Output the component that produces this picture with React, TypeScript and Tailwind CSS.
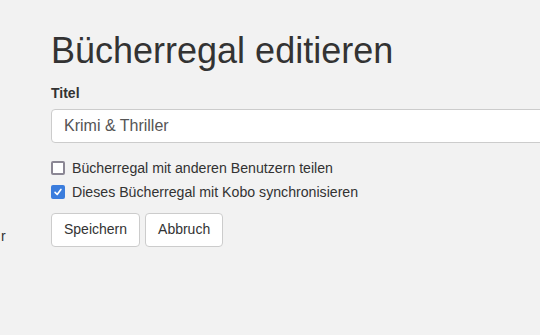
function Box({ checked }: { checked?: boolean }) {
  return checked ? (
    <span className="flex h-[14px] w-[14px] shrink-0 items-center justify-center rounded-[2px] bg-[#3b7ddd]">
      <svg viewBox="0 0 12 12" className="h-[10px] w-[10px]" fill="none" stroke="white" strokeWidth="2" strokeLinecap="round" strokeLinejoin="round">
        <path d="M2.5 6.5 5 9l4.5-6" />
      </svg>
    </span>
  ) : (
    <span className="h-[14px] w-[14px] shrink-0 rounded-[2px] border-2 border-[#8b8794] bg-white" />
  );
}

export default function App() {
  return (
    <div className="relative h-[335px] w-[540px] overflow-hidden bg-[#f2f2f2] font-['Liberation_Sans',Arial,sans-serif] text-[14px] text-[#333]">
      <span className="absolute left-[1px] top-[226px] text-[14px] text-[#333]">r</span>
      <div className="pl-[51px] pt-[31px]">
        <h1 className="text-[36px] leading-[1.1] font-normal">Bücherregal editieren</h1>
        <form className="mt-[12px]">
          <label className="mb-[5px] block font-bold">Titel</label>
          <input
            type="text"
            defaultValue="Krimi & Thriller"
            className="block h-[34px] w-[520px] rounded-[4px] border border-[#ccc] bg-white px-[12px] text-[16px] text-[#555] outline-none"
          />
          <div className="mt-[16px] flex flex-col gap-[5px] text-[14.15px]">
            <div className="flex items-center gap-[7px] leading-[19px]">
              <Box />
              Bücherregal mit anderen Benutzern teilen
            </div>
            <div className="flex items-center gap-[7px] leading-[19px]">
              <Box checked />
              Dieses Bücherregal mit Kobo synchronisieren
            </div>
          </div>
          <div className="mt-[11px] flex gap-[5px]">
            <button type="button" className="h-[34px] rounded-[4px] border border-[#ccc] bg-white px-[12px] text-[14px] text-[#333]">
              Speichern
            </button>
            <button type="button" className="h-[34px] rounded-[4px] border border-[#ccc] bg-white px-[12px] text-[14px] text-[#333]">
              Abbruch
            </button>
          </div>
        </form>
      </div>
    </div>
  );
}
